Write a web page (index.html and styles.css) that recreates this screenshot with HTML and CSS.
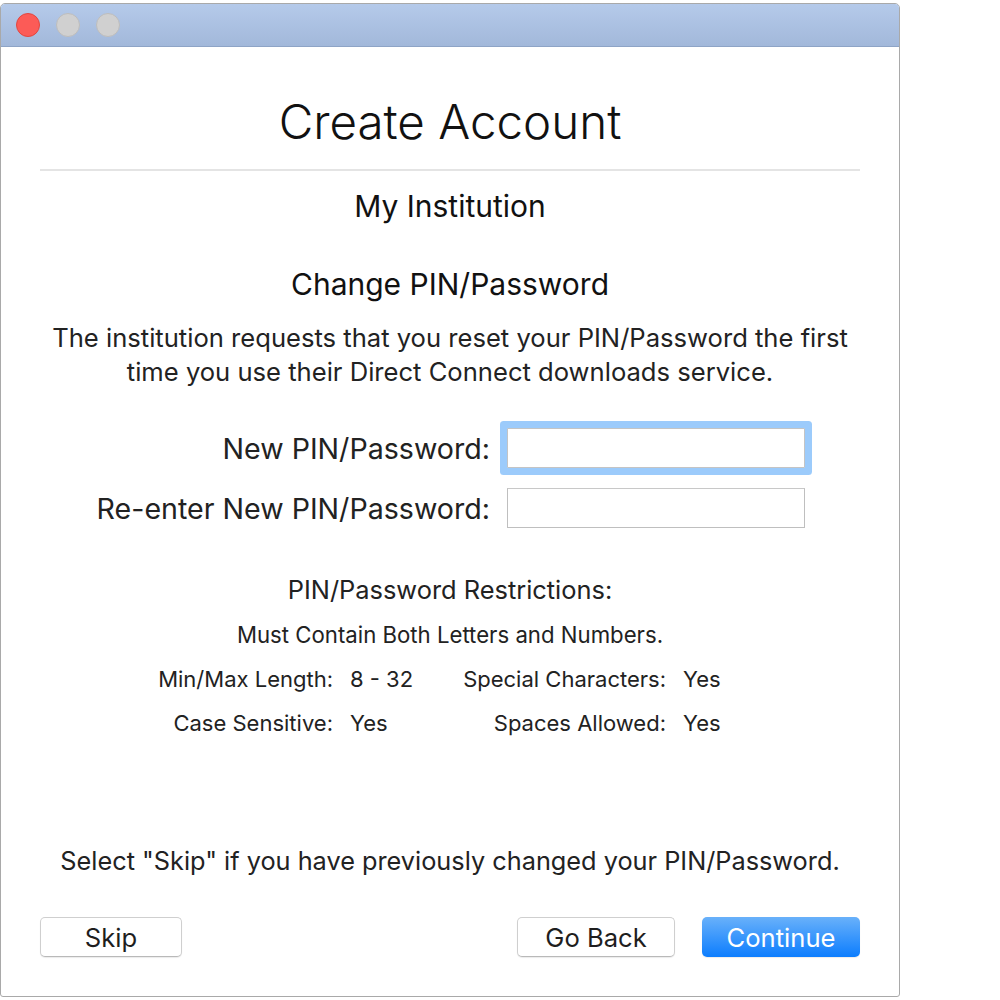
FILE: index.html
```html
<!DOCTYPE html>
<html lang="en">
<head>
  <meta charset="UTF-8">
  <title>Create Account</title>
  <link rel="stylesheet" href="styles.css">
</head>
<body>
  <div class="window">
    <div class="titlebar">
      <span class="light close"></span>
      <span class="light"></span>
      <span class="light"></span>
    </div>

    <div class="content">
      <h1 class="title">Create Account</h1>
      <div class="rule"></div>
      <div class="institution">My Institution</div>
      <h2 class="subtitle">Change PIN/Password</h2>
      <p class="intro">The institution requests that you reset your PIN/Password the first time you use their Direct Connect downloads service.</p>

      <div class="form">
        <label class="field-label" for="new-pin">New PIN/Password:</label>
        <input class="field focused" id="new-pin" type="password">
        <label class="field-label" for="re-pin">Re-enter New PIN/Password:</label>
        <input class="field" id="re-pin" type="password">
      </div>

      <div class="restrictions">
        <div class="restrictions-head">PIN/Password Restrictions:</div>
        <div class="restrictions-note">Must Contain Both Letters and Numbers.</div>
        <div class="rules">
          <span class="rule-key">Min/Max Length:</span>
          <span class="rule-val">8 - 32</span>
          <span class="rule-key">Special Characters:</span>
          <span class="rule-val">Yes</span>
          <span class="rule-key">Case Sensitive:</span>
          <span class="rule-val">Yes</span>
          <span class="rule-key">Spaces Allowed:</span>
          <span class="rule-val">Yes</span>
        </div>
      </div>

      <p class="skip-note">Select "Skip" if you have previously changed your PIN/Password.</p>

      <div class="actions">
        <button class="btn skip">Skip</button>
        <div class="actions-right">
          <button class="btn">Go Back</button>
          <button class="btn primary">Continue</button>
        </div>
      </div>
    </div>
  </div>
</body>
</html>
```

FILE: styles.css
```css
body {
  margin: 0;
  background: #fff;
  font-family: Inter, "Noto Sans", sans-serif;
  color: #222;
}
.window {
  width: 900px;
  height: 994px;
  margin-top: 3px;
  box-sizing: border-box;
  border: 1px solid #a9a9a9;
  border-radius: 5px 5px 3px 3px;
  display: flex;
  flex-direction: column;
  overflow: hidden;
}
.titlebar {
  height: 42px;
  flex: none;
  background: linear-gradient(#b5caea, #a2b8da);
  border-bottom: 1px solid #8ea4c6;
  display: flex;
  align-items: center;
  gap: 16px;
  padding-left: 15px;
}
.light {
  width: 22px;
  height: 22px;
  border-radius: 50%;
  background: #d0d0d0;
  border: 1px solid #bdbdbd;
}
.light.close {
  background: #fc5b57;
  border-color: #e2463f;
}
.content {
  flex: 1;
  display: flex;
  flex-direction: column;
  padding: 0 39px 39px;
  text-align: center;
}
.title {
  margin: 43px 0 0;
  font-size: 47.5px;
  font-weight: 300;
  line-height: 64px;
  color: #111;
}
.rule {
  height: 2px;
  background: #e4e4e4;
  margin-top: 15px;
}
.institution {
  margin-top: 17px;
  font-size: 30px;
  line-height: 36px;
  color: #111;
}
.subtitle {
  margin: 42px 0 0;
  font-size: 30px;
  font-weight: 400;
  line-height: 36px;
  color: #111;
}
.intro {
  margin: 19px 0 0;
  font-size: 25.6px;
  line-height: 34px;
}
.form {
  margin-top: 39px;
  display: grid;
  grid-template-columns: 1fr 298px;
  column-gap: 17px;
  row-gap: 20px;
  padding-right: 55px;
  align-items: center;
}
.field-label {
  text-align: right;
  font-size: 28.6px;
}
.field {
  height: 40px;
  box-sizing: border-box;
  border: 1px solid #bfbfbf;
  border-top-color: #c8c8c8;
  background: #fff;
  margin: 0;
  outline: none;
}
.field.focused {
  border-color: #c4c4c4;
  box-shadow: 0 0 0 7px #9ccbfb;
  border-radius: 1px;
}
.restrictions {
  margin-top: 47px;
}
.restrictions-head {
  font-size: 25.4px;
  line-height: 30px;
}
.restrictions-note {
  margin-top: 17px;
  font-size: 22.2px;
  line-height: 26px;
}
.rules {
  margin-top: 18px;
  display: grid;
  grid-template-columns: 293px 64px 235px 1fr;
  column-gap: 17px;
  row-gap: 18px;
  font-size: 22px;
  line-height: 26px;
  text-align: left;
}
.rule-key {
  text-align: right;
}
.skip-note {
  margin: auto 0 0;
  font-size: 25.3px;
  line-height: 30px;
}
.actions {
  margin-top: 41px;
  display: flex;
  justify-content: space-between;
}
.actions-right {
  display: flex;
  gap: 27px;
}
.btn {
  height: 40px;
  width: 142px;
  box-sizing: border-box;
  border: 1px solid #cfcfcf;
  border-bottom-color: #b9b9b9;
  border-radius: 5px;
  background: #fff;
  font-family: inherit;
  font-size: 25.6px;
  color: #1e1e1e;
  box-shadow: 0 1px 1px rgba(0, 0, 0, 0.08);
}
.actions-right .btn {
  width: 158px;
}
.btn.primary {
  border: none;
  color: #fff;
  background: linear-gradient(#69b1fa, #0c7dfe);
}
```
